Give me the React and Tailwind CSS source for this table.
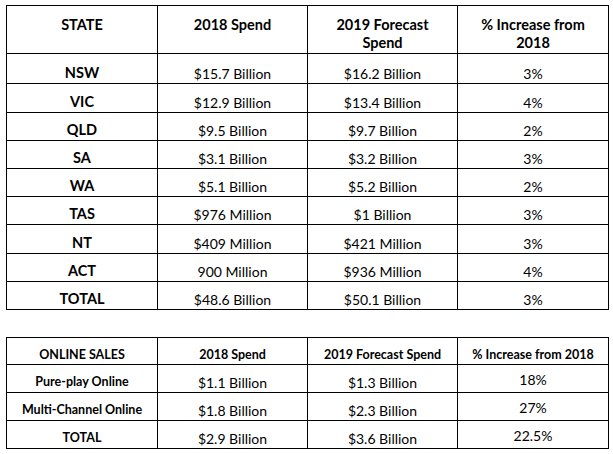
const states = [
  { name: "NSW", spend: "$15.7 Billion", forecast: "$16.2 Billion", pct: "3%", h: "h-[30px]" },
  { name: "VIC", spend: "$12.9 Billion", forecast: "$13.4 Billion", pct: "4%", h: "h-[29px]" },
  { name: "QLD", spend: "$9.5 Billion", forecast: "$9.7 Billion", pct: "2%", h: "h-[28px]" },
  { name: "SA", spend: "$3.1 Billion", forecast: "$3.2 Billion", pct: "3%", h: "h-[28px]" },
  { name: "WA", spend: "$5.1 Billion", forecast: "$5.2 Billion", pct: "2%", h: "h-[28px]" },
  { name: "TAS", spend: "$976 Million", forecast: "$1 Billion", pct: "3%", h: "h-[28px]" },
  { name: "NT", spend: "$409 Million", forecast: "$421 Million", pct: "3%", h: "h-[29px]" },
  { name: "ACT", spend: "900 Million", forecast: "$936 Million", pct: "4%", h: "h-[28px]" },
  { name: "TOTAL", spend: "$48.6 Billion", forecast: "$50.1 Billion", pct: "3%", h: "h-[28px]" },
];

const online = [
  { name: "Pure-play Online", spend: "$1.1 Billion", forecast: "$1.3 Billion", pct: "18%" },
  { name: "Multi-Channel Online", spend: "$1.8 Billion", forecast: "$2.3 Billion", pct: "27%" },
  { name: "TOTAL", spend: "$2.9 Billion", forecast: "$3.6 Billion", pct: "22.5%" },
];

const cell = "flex justify-center text-center border-r border-b border-black";

export default function App() {
  return (
    <div className="w-[613px] h-[454px] bg-white text-black font-['Lato',sans-serif] pt-[5px] pl-[6px]">
      <div className="grid grid-cols-[151px_150px_150px_151px] w-[603px] border-l border-t border-black">
        <div className={`${cell} h-[48px] items-start pt-[10px] text-[14.5px] leading-[18px] font-bold`}>STATE</div>
        <div className={`${cell} h-[48px] items-start pt-[10px] text-[14.5px] leading-[18px] font-bold`}>2018 Spend</div>
        <div className={`${cell} h-[48px] items-start pt-[10px] text-[14.5px] leading-[18px] font-bold`}>
          2019 Forecast
          <br />
          Spend
        </div>
        <div className={`${cell} h-[48px] items-start pt-[10px] text-[14.5px] leading-[18px] font-bold`}>
          % Increase from
          <br />
          2018
        </div>
        {states.map((s) => (
          <div key={s.name} className="contents">
            <div className={`${cell} ${s.h} items-end pb-[1px] text-[14.5px] leading-[18px] font-bold`}>{s.name}</div>
            <div className={`${cell} ${s.h} items-end pb-0 text-[14px] leading-[18px]`}>{s.spend}</div>
            <div className={`${cell} ${s.h} items-end pb-0 text-[14px] leading-[18px]`}>{s.forecast}</div>
            <div className={`${cell} ${s.h} items-end pb-0 text-[14px] leading-[18px]`}>{s.pct}</div>
          </div>
        ))}
      </div>

      <div className="grid grid-cols-[151px_150px_150px_151px] w-[603px] mt-[27px] border-l border-t border-black">
        <div className={`${cell} h-[27px] items-end pb-[1px] text-[12.5px] leading-[16px] font-bold`}>ONLINE SALES</div>
        <div className={`${cell} h-[27px] items-end pb-[1px] text-[12.5px] leading-[16px] font-bold`}>2018 Spend</div>
        <div className={`${cell} h-[27px] items-end pb-[1px] text-[12.5px] leading-[16px] font-bold`}>2019 Forecast Spend</div>
        <div className={`${cell} h-[27px] items-end pb-[1px] text-[12.5px] leading-[16px] font-bold`}>% Increase from 2018</div>
        {online.map((r) => (
          <div key={r.name} className="contents">
            <div className={`${cell} h-[28px] items-end pb-[2px] text-[12.5px] leading-[16px] font-bold`}>{r.name}</div>
            <div className={`${cell} h-[28px] items-end pb-0 text-[14px] leading-[18px]`}>{r.spend}</div>
            <div className={`${cell} h-[28px] items-end pb-0 text-[14px] leading-[18px]`}>{r.forecast}</div>
            <div className={`${cell} h-[28px] items-end pb-[3px] text-[14px] leading-[18px]`}>{r.pct}</div>
          </div>
        ))}
      </div>
    </div>
  );
}
